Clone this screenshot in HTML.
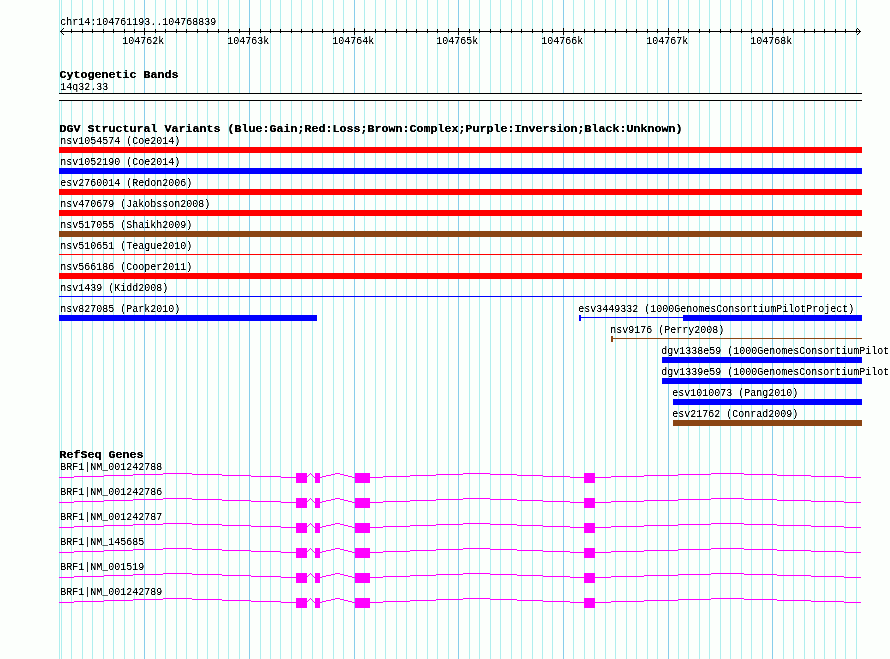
<!DOCTYPE html>
<html><head><meta charset="utf-8"><title>GBrowse track view</title>
<style>
html,body{margin:0;padding:0;background:#fcfffc;}
body{width:890px;height:659px;overflow:hidden;position:relative;}
svg{position:absolute;left:0;top:0;}
.s,.b{position:absolute;white-space:pre;font-family:"Liberation Mono",monospace;line-height:13px;height:13px;transform-origin:0 0;}
.s{-webkit-text-stroke:0.05px #000;font-size:11.5px;font-weight:400;color:#000;transform:translate(-0.7px,1px) scaleX(0.86942);}
.b{-webkit-text-stroke:0.2px #000;font-size:11.5px;font-weight:700;color:#000;transform:translate(-0.5px,1px) scaleX(1.01433);}
</style></head><body>
<svg width="890" height="659" viewBox="0 0 890 659" shape-rendering="crispEdges">
<rect x="59" y="0" width="1" height="659" fill="#afeeee"/>
<rect x="61" y="0" width="1" height="659" fill="#afeeee"/>
<rect x="71" y="0" width="1" height="659" fill="#afeeee"/>
<rect x="82" y="0" width="1" height="659" fill="#afeeee"/>
<rect x="92" y="0" width="1" height="659" fill="#afeeee"/>
<rect x="103" y="0" width="1" height="659" fill="#afeeee"/>
<rect x="113" y="0" width="1" height="659" fill="#afeeee"/>
<rect x="124" y="0" width="1" height="659" fill="#afeeee"/>
<rect x="134" y="0" width="1" height="659" fill="#afeeee"/>
<rect x="144" y="0" width="1" height="659" fill="#87ceeb"/>
<rect x="155" y="0" width="1" height="659" fill="#afeeee"/>
<rect x="165" y="0" width="1" height="659" fill="#afeeee"/>
<rect x="176" y="0" width="1" height="659" fill="#afeeee"/>
<rect x="186" y="0" width="1" height="659" fill="#afeeee"/>
<rect x="197" y="0" width="1" height="659" fill="#afeeee"/>
<rect x="207" y="0" width="1" height="659" fill="#afeeee"/>
<rect x="218" y="0" width="1" height="659" fill="#afeeee"/>
<rect x="228" y="0" width="1" height="659" fill="#afeeee"/>
<rect x="239" y="0" width="1" height="659" fill="#afeeee"/>
<rect x="249" y="0" width="1" height="659" fill="#87ceeb"/>
<rect x="260" y="0" width="1" height="659" fill="#afeeee"/>
<rect x="270" y="0" width="1" height="659" fill="#afeeee"/>
<rect x="280" y="0" width="1" height="659" fill="#afeeee"/>
<rect x="291" y="0" width="1" height="659" fill="#afeeee"/>
<rect x="301" y="0" width="1" height="659" fill="#afeeee"/>
<rect x="312" y="0" width="1" height="659" fill="#afeeee"/>
<rect x="322" y="0" width="1" height="659" fill="#afeeee"/>
<rect x="333" y="0" width="1" height="659" fill="#afeeee"/>
<rect x="343" y="0" width="1" height="659" fill="#afeeee"/>
<rect x="354" y="0" width="1" height="659" fill="#87ceeb"/>
<rect x="364" y="0" width="1" height="659" fill="#afeeee"/>
<rect x="375" y="0" width="1" height="659" fill="#afeeee"/>
<rect x="385" y="0" width="1" height="659" fill="#afeeee"/>
<rect x="396" y="0" width="1" height="659" fill="#afeeee"/>
<rect x="406" y="0" width="1" height="659" fill="#afeeee"/>
<rect x="416" y="0" width="1" height="659" fill="#afeeee"/>
<rect x="427" y="0" width="1" height="659" fill="#afeeee"/>
<rect x="437" y="0" width="1" height="659" fill="#afeeee"/>
<rect x="448" y="0" width="1" height="659" fill="#afeeee"/>
<rect x="458" y="0" width="1" height="659" fill="#87ceeb"/>
<rect x="469" y="0" width="1" height="659" fill="#afeeee"/>
<rect x="479" y="0" width="1" height="659" fill="#afeeee"/>
<rect x="490" y="0" width="1" height="659" fill="#afeeee"/>
<rect x="500" y="0" width="1" height="659" fill="#afeeee"/>
<rect x="511" y="0" width="1" height="659" fill="#afeeee"/>
<rect x="521" y="0" width="1" height="659" fill="#afeeee"/>
<rect x="532" y="0" width="1" height="659" fill="#afeeee"/>
<rect x="542" y="0" width="1" height="659" fill="#afeeee"/>
<rect x="552" y="0" width="1" height="659" fill="#afeeee"/>
<rect x="563" y="0" width="1" height="659" fill="#87ceeb"/>
<rect x="573" y="0" width="1" height="659" fill="#afeeee"/>
<rect x="584" y="0" width="1" height="659" fill="#afeeee"/>
<rect x="594" y="0" width="1" height="659" fill="#afeeee"/>
<rect x="605" y="0" width="1" height="659" fill="#afeeee"/>
<rect x="615" y="0" width="1" height="659" fill="#afeeee"/>
<rect x="626" y="0" width="1" height="659" fill="#afeeee"/>
<rect x="636" y="0" width="1" height="659" fill="#afeeee"/>
<rect x="647" y="0" width="1" height="659" fill="#afeeee"/>
<rect x="657" y="0" width="1" height="659" fill="#afeeee"/>
<rect x="668" y="0" width="1" height="659" fill="#87ceeb"/>
<rect x="678" y="0" width="1" height="659" fill="#afeeee"/>
<rect x="688" y="0" width="1" height="659" fill="#afeeee"/>
<rect x="699" y="0" width="1" height="659" fill="#afeeee"/>
<rect x="709" y="0" width="1" height="659" fill="#afeeee"/>
<rect x="720" y="0" width="1" height="659" fill="#afeeee"/>
<rect x="730" y="0" width="1" height="659" fill="#afeeee"/>
<rect x="741" y="0" width="1" height="659" fill="#afeeee"/>
<rect x="751" y="0" width="1" height="659" fill="#afeeee"/>
<rect x="762" y="0" width="1" height="659" fill="#afeeee"/>
<rect x="772" y="0" width="1" height="659" fill="#87ceeb"/>
<rect x="783" y="0" width="1" height="659" fill="#afeeee"/>
<rect x="793" y="0" width="1" height="659" fill="#afeeee"/>
<rect x="804" y="0" width="1" height="659" fill="#afeeee"/>
<rect x="814" y="0" width="1" height="659" fill="#afeeee"/>
<rect x="824" y="0" width="1" height="659" fill="#afeeee"/>
<rect x="835" y="0" width="1" height="659" fill="#afeeee"/>
<rect x="845" y="0" width="1" height="659" fill="#afeeee"/>
<rect x="856" y="0" width="1" height="659" fill="#afeeee"/>
<rect x="59" y="94" width="803" height="6" fill="#fcfffc"/>
<rect x="59" y="147" width="803" height="6" fill="#ff0000"/>
<rect x="59" y="168" width="803" height="6" fill="#0000ff"/>
<rect x="59" y="189" width="803" height="6" fill="#ff0000"/>
<rect x="59" y="210" width="803" height="6" fill="#ff0000"/>
<rect x="59" y="231" width="803" height="6" fill="#8b4513"/>
<rect x="59" y="273" width="803" height="6" fill="#ff0000"/>
<rect x="59" y="315" width="258" height="6" fill="#0000ff"/>
<rect x="579" y="315" width="2" height="6" fill="#0000ff"/>
<rect x="683" y="315" width="179" height="6" fill="#0000ff"/>
<rect x="611" y="336" width="2" height="6" fill="#8b4513"/>
<rect x="662" y="357" width="200" height="6" fill="#0000ff"/>
<rect x="662" y="378" width="200" height="6" fill="#0000ff"/>
<rect x="673" y="399" width="189" height="6" fill="#0000ff"/>
<rect x="673" y="420" width="189" height="6" fill="#8b4513"/>
<rect x="296" y="473" width="11" height="10" fill="#ff00ff"/>
<rect x="315" y="473" width="5" height="10" fill="#ff00ff"/>
<rect x="355" y="473" width="15" height="10" fill="#ff00ff"/>
<rect x="584" y="473" width="11" height="10" fill="#ff00ff"/>
<rect x="296" y="498" width="11" height="10" fill="#ff00ff"/>
<rect x="315" y="498" width="5" height="10" fill="#ff00ff"/>
<rect x="355" y="498" width="15" height="10" fill="#ff00ff"/>
<rect x="584" y="498" width="11" height="10" fill="#ff00ff"/>
<rect x="296" y="523" width="11" height="10" fill="#ff00ff"/>
<rect x="315" y="523" width="5" height="10" fill="#ff00ff"/>
<rect x="355" y="523" width="15" height="10" fill="#ff00ff"/>
<rect x="584" y="523" width="11" height="10" fill="#ff00ff"/>
<rect x="296" y="548" width="11" height="10" fill="#ff00ff"/>
<rect x="315" y="548" width="5" height="10" fill="#ff00ff"/>
<rect x="355" y="548" width="15" height="10" fill="#ff00ff"/>
<rect x="584" y="548" width="11" height="10" fill="#ff00ff"/>
<rect x="296" y="573" width="11" height="10" fill="#ff00ff"/>
<rect x="315" y="573" width="5" height="10" fill="#ff00ff"/>
<rect x="355" y="573" width="15" height="10" fill="#ff00ff"/>
<rect x="584" y="573" width="11" height="10" fill="#ff00ff"/>
<rect x="296" y="598" width="11" height="10" fill="#ff00ff"/>
<rect x="315" y="598" width="5" height="10" fill="#ff00ff"/>
<rect x="355" y="598" width="15" height="10" fill="#ff00ff"/>
<rect x="584" y="598" width="11" height="10" fill="#ff00ff"/>
<path fill="#000000" d="M60 31h801v1h-801zM60 31h1v1h-1zM61 30h1v1h-1zM62 29h1v1h-1zM63 28h1v1h-1zM60 31h1v1h-1zM61 32h1v1h-1zM62 33h1v1h-1zM63 34h1v1h-1zM860 31h1v1h-1zM859 30h1v1h-1zM858 29h1v1h-1zM857 28h1v1h-1zM860 31h1v1h-1zM859 32h1v1h-1zM858 33h1v1h-1zM857 34h1v1h-1zM71 29h1v1h-1zM71 30h1v1h-1zM71 31h1v1h-1zM71 32h1v1h-1zM82 29h1v1h-1zM82 30h1v1h-1zM82 31h1v1h-1zM82 32h1v1h-1zM92 29h1v1h-1zM92 30h1v1h-1zM92 31h1v1h-1zM92 32h1v1h-1zM103 29h1v1h-1zM103 30h1v1h-1zM103 31h1v1h-1zM103 32h1v1h-1zM113 29h1v1h-1zM113 30h1v1h-1zM113 31h1v1h-1zM113 32h1v1h-1zM124 29h1v1h-1zM124 30h1v1h-1zM124 31h1v1h-1zM124 32h1v1h-1zM134 29h1v1h-1zM134 30h1v1h-1zM134 31h1v1h-1zM134 32h1v1h-1zM144 28h1v1h-1zM144 29h1v1h-1zM144 30h1v1h-1zM144 31h1v1h-1zM144 32h1v1h-1zM144 33h1v1h-1zM144 34h1v1h-1zM155 29h1v1h-1zM155 30h1v1h-1zM155 31h1v1h-1zM155 32h1v1h-1zM165 29h1v1h-1zM165 30h1v1h-1zM165 31h1v1h-1zM165 32h1v1h-1zM176 29h1v1h-1zM176 30h1v1h-1zM176 31h1v1h-1zM176 32h1v1h-1zM186 29h1v1h-1zM186 30h1v1h-1zM186 31h1v1h-1zM186 32h1v1h-1zM197 29h1v1h-1zM197 30h1v1h-1zM197 31h1v1h-1zM197 32h1v1h-1zM207 29h1v1h-1zM207 30h1v1h-1zM207 31h1v1h-1zM207 32h1v1h-1zM218 29h1v1h-1zM218 30h1v1h-1zM218 31h1v1h-1zM218 32h1v1h-1zM228 29h1v1h-1zM228 30h1v1h-1zM228 31h1v1h-1zM228 32h1v1h-1zM239 29h1v1h-1zM239 30h1v1h-1zM239 31h1v1h-1zM239 32h1v1h-1zM249 28h1v1h-1zM249 29h1v1h-1zM249 30h1v1h-1zM249 31h1v1h-1zM249 32h1v1h-1zM249 33h1v1h-1zM249 34h1v1h-1zM260 29h1v1h-1zM260 30h1v1h-1zM260 31h1v1h-1zM260 32h1v1h-1zM270 29h1v1h-1zM270 30h1v1h-1zM270 31h1v1h-1zM270 32h1v1h-1zM280 29h1v1h-1zM280 30h1v1h-1zM280 31h1v1h-1zM280 32h1v1h-1zM291 29h1v1h-1zM291 30h1v1h-1zM291 31h1v1h-1zM291 32h1v1h-1zM301 29h1v1h-1zM301 30h1v1h-1zM301 31h1v1h-1zM301 32h1v1h-1zM312 29h1v1h-1zM312 30h1v1h-1zM312 31h1v1h-1zM312 32h1v1h-1zM322 29h1v1h-1zM322 30h1v1h-1zM322 31h1v1h-1zM322 32h1v1h-1zM333 29h1v1h-1zM333 30h1v1h-1zM333 31h1v1h-1zM333 32h1v1h-1zM343 29h1v1h-1zM343 30h1v1h-1zM343 31h1v1h-1zM343 32h1v1h-1zM354 28h1v1h-1zM354 29h1v1h-1zM354 30h1v1h-1zM354 31h1v1h-1zM354 32h1v1h-1zM354 33h1v1h-1zM354 34h1v1h-1zM364 29h1v1h-1zM364 30h1v1h-1zM364 31h1v1h-1zM364 32h1v1h-1zM375 29h1v1h-1zM375 30h1v1h-1zM375 31h1v1h-1zM375 32h1v1h-1zM385 29h1v1h-1zM385 30h1v1h-1zM385 31h1v1h-1zM385 32h1v1h-1zM396 29h1v1h-1zM396 30h1v1h-1zM396 31h1v1h-1zM396 32h1v1h-1zM406 29h1v1h-1zM406 30h1v1h-1zM406 31h1v1h-1zM406 32h1v1h-1zM416 29h1v1h-1zM416 30h1v1h-1zM416 31h1v1h-1zM416 32h1v1h-1zM427 29h1v1h-1zM427 30h1v1h-1zM427 31h1v1h-1zM427 32h1v1h-1zM437 29h1v1h-1zM437 30h1v1h-1zM437 31h1v1h-1zM437 32h1v1h-1zM448 29h1v1h-1zM448 30h1v1h-1zM448 31h1v1h-1zM448 32h1v1h-1zM458 28h1v1h-1zM458 29h1v1h-1zM458 30h1v1h-1zM458 31h1v1h-1zM458 32h1v1h-1zM458 33h1v1h-1zM458 34h1v1h-1zM469 29h1v1h-1zM469 30h1v1h-1zM469 31h1v1h-1zM469 32h1v1h-1zM479 29h1v1h-1zM479 30h1v1h-1zM479 31h1v1h-1zM479 32h1v1h-1zM490 29h1v1h-1zM490 30h1v1h-1zM490 31h1v1h-1zM490 32h1v1h-1zM500 29h1v1h-1zM500 30h1v1h-1zM500 31h1v1h-1zM500 32h1v1h-1zM511 29h1v1h-1zM511 30h1v1h-1zM511 31h1v1h-1zM511 32h1v1h-1zM521 29h1v1h-1zM521 30h1v1h-1zM521 31h1v1h-1zM521 32h1v1h-1zM532 29h1v1h-1zM532 30h1v1h-1zM532 31h1v1h-1zM532 32h1v1h-1zM542 29h1v1h-1zM542 30h1v1h-1zM542 31h1v1h-1zM542 32h1v1h-1zM552 29h1v1h-1zM552 30h1v1h-1zM552 31h1v1h-1zM552 32h1v1h-1zM563 28h1v1h-1zM563 29h1v1h-1zM563 30h1v1h-1zM563 31h1v1h-1zM563 32h1v1h-1zM563 33h1v1h-1zM563 34h1v1h-1zM573 29h1v1h-1zM573 30h1v1h-1zM573 31h1v1h-1zM573 32h1v1h-1zM584 29h1v1h-1zM584 30h1v1h-1zM584 31h1v1h-1zM584 32h1v1h-1zM594 29h1v1h-1zM594 30h1v1h-1zM594 31h1v1h-1zM594 32h1v1h-1zM605 29h1v1h-1zM605 30h1v1h-1zM605 31h1v1h-1zM605 32h1v1h-1zM615 29h1v1h-1zM615 30h1v1h-1zM615 31h1v1h-1zM615 32h1v1h-1zM626 29h1v1h-1zM626 30h1v1h-1zM626 31h1v1h-1zM626 32h1v1h-1zM636 29h1v1h-1zM636 30h1v1h-1zM636 31h1v1h-1zM636 32h1v1h-1zM647 29h1v1h-1zM647 30h1v1h-1zM647 31h1v1h-1zM647 32h1v1h-1zM657 29h1v1h-1zM657 30h1v1h-1zM657 31h1v1h-1zM657 32h1v1h-1zM668 28h1v1h-1zM668 29h1v1h-1zM668 30h1v1h-1zM668 31h1v1h-1zM668 32h1v1h-1zM668 33h1v1h-1zM668 34h1v1h-1zM678 29h1v1h-1zM678 30h1v1h-1zM678 31h1v1h-1zM678 32h1v1h-1zM688 29h1v1h-1zM688 30h1v1h-1zM688 31h1v1h-1zM688 32h1v1h-1zM699 29h1v1h-1zM699 30h1v1h-1zM699 31h1v1h-1zM699 32h1v1h-1zM709 29h1v1h-1zM709 30h1v1h-1zM709 31h1v1h-1zM709 32h1v1h-1zM720 29h1v1h-1zM720 30h1v1h-1zM720 31h1v1h-1zM720 32h1v1h-1zM730 29h1v1h-1zM730 30h1v1h-1zM730 31h1v1h-1zM730 32h1v1h-1zM741 29h1v1h-1zM741 30h1v1h-1zM741 31h1v1h-1zM741 32h1v1h-1zM751 29h1v1h-1zM751 30h1v1h-1zM751 31h1v1h-1zM751 32h1v1h-1zM762 29h1v1h-1zM762 30h1v1h-1zM762 31h1v1h-1zM762 32h1v1h-1zM772 28h1v1h-1zM772 29h1v1h-1zM772 30h1v1h-1zM772 31h1v1h-1zM772 32h1v1h-1zM772 33h1v1h-1zM772 34h1v1h-1zM783 29h1v1h-1zM783 30h1v1h-1zM783 31h1v1h-1zM783 32h1v1h-1zM793 29h1v1h-1zM793 30h1v1h-1zM793 31h1v1h-1zM793 32h1v1h-1zM804 29h1v1h-1zM804 30h1v1h-1zM804 31h1v1h-1zM804 32h1v1h-1zM814 29h1v1h-1zM814 30h1v1h-1zM814 31h1v1h-1zM814 32h1v1h-1zM824 29h1v1h-1zM824 30h1v1h-1zM824 31h1v1h-1zM824 32h1v1h-1zM835 29h1v1h-1zM835 30h1v1h-1zM835 31h1v1h-1zM835 32h1v1h-1zM845 29h1v1h-1zM845 30h1v1h-1zM845 31h1v1h-1zM845 32h1v1h-1zM856 29h1v1h-1zM856 30h1v1h-1zM856 31h1v1h-1zM856 32h1v1h-1zM59 93h803v1h-803zM59 100h803v1h-803z"/>
<path fill="#ff0000" d="M59 254h803v1h-803z"/>
<path fill="#0000ff" d="M59 296h803v1h-803zM579 317h283v1h-283z"/>
<path fill="#8b4513" d="M611 338h251v1h-251z"/>
<path fill="#ff00ff" d="M59 477h15v1h-15zM74 476h30v1h-30zM104 475h29v1h-29zM133 474h30v1h-30zM163 473h15v1h-15zM177 473h15v1h-15zM192 474h30v1h-30zM222 475h29v1h-29zM251 476h30v1h-30zM281 477h15v1h-15zM306 477h1v1h-1zM307 476h1v1h-1zM308 475h1v1h-1zM309 474h1v1h-1zM310 473h1v1h-1zM310 473h1v1h-1zM311 474h1v1h-1zM312 475h1v1h-1zM313 476h1v1h-1zM314 477h1v1h-1zM319 477h3v1h-3zM322 476h4v1h-4zM326 475h5v1h-5zM331 474h4v1h-4zM335 473h3v1h-3zM337 473h3v1h-3zM340 474h4v1h-4zM344 475h4v1h-4zM348 476h4v1h-4zM352 477h3v1h-3zM369 477h14v1h-14zM383 476h27v1h-27zM410 475h26v1h-26zM436 474h27v1h-27zM463 473h14v1h-14zM476 473h14v1h-14zM490 474h27v1h-27zM517 475h26v1h-26zM543 476h27v1h-27zM570 477h14v1h-14zM594 477h17v1h-17zM611 476h33v1h-33zM644 475h34v1h-34zM678 474h33v1h-33zM711 473h17v1h-17zM727 473h17v1h-17zM744 474h33v1h-33zM777 475h34v1h-34zM811 476h33v1h-33zM844 477h17v1h-17zM59 502h15v1h-15zM74 501h30v1h-30zM104 500h29v1h-29zM133 499h30v1h-30zM163 498h15v1h-15zM177 498h15v1h-15zM192 499h30v1h-30zM222 500h29v1h-29zM251 501h30v1h-30zM281 502h15v1h-15zM306 502h1v1h-1zM307 501h1v1h-1zM308 500h1v1h-1zM309 499h1v1h-1zM310 498h1v1h-1zM310 498h1v1h-1zM311 499h1v1h-1zM312 500h1v1h-1zM313 501h1v1h-1zM314 502h1v1h-1zM319 502h3v1h-3zM322 501h4v1h-4zM326 500h5v1h-5zM331 499h4v1h-4zM335 498h3v1h-3zM337 498h3v1h-3zM340 499h4v1h-4zM344 500h4v1h-4zM348 501h4v1h-4zM352 502h3v1h-3zM369 502h14v1h-14zM383 501h27v1h-27zM410 500h26v1h-26zM436 499h27v1h-27zM463 498h14v1h-14zM476 498h14v1h-14zM490 499h27v1h-27zM517 500h26v1h-26zM543 501h27v1h-27zM570 502h14v1h-14zM594 502h17v1h-17zM611 501h33v1h-33zM644 500h34v1h-34zM678 499h33v1h-33zM711 498h17v1h-17zM727 498h17v1h-17zM744 499h33v1h-33zM777 500h34v1h-34zM811 501h33v1h-33zM844 502h17v1h-17zM59 527h15v1h-15zM74 526h30v1h-30zM104 525h29v1h-29zM133 524h30v1h-30zM163 523h15v1h-15zM177 523h15v1h-15zM192 524h30v1h-30zM222 525h29v1h-29zM251 526h30v1h-30zM281 527h15v1h-15zM306 527h1v1h-1zM307 526h1v1h-1zM308 525h1v1h-1zM309 524h1v1h-1zM310 523h1v1h-1zM310 523h1v1h-1zM311 524h1v1h-1zM312 525h1v1h-1zM313 526h1v1h-1zM314 527h1v1h-1zM319 527h3v1h-3zM322 526h4v1h-4zM326 525h5v1h-5zM331 524h4v1h-4zM335 523h3v1h-3zM337 523h3v1h-3zM340 524h4v1h-4zM344 525h4v1h-4zM348 526h4v1h-4zM352 527h3v1h-3zM369 527h14v1h-14zM383 526h27v1h-27zM410 525h26v1h-26zM436 524h27v1h-27zM463 523h14v1h-14zM476 523h14v1h-14zM490 524h27v1h-27zM517 525h26v1h-26zM543 526h27v1h-27zM570 527h14v1h-14zM594 527h17v1h-17zM611 526h33v1h-33zM644 525h34v1h-34zM678 524h33v1h-33zM711 523h17v1h-17zM727 523h17v1h-17zM744 524h33v1h-33zM777 525h34v1h-34zM811 526h33v1h-33zM844 527h17v1h-17zM59 552h15v1h-15zM74 551h30v1h-30zM104 550h29v1h-29zM133 549h30v1h-30zM163 548h15v1h-15zM177 548h15v1h-15zM192 549h30v1h-30zM222 550h29v1h-29zM251 551h30v1h-30zM281 552h15v1h-15zM306 552h1v1h-1zM307 551h1v1h-1zM308 550h1v1h-1zM309 549h1v1h-1zM310 548h1v1h-1zM310 548h1v1h-1zM311 549h1v1h-1zM312 550h1v1h-1zM313 551h1v1h-1zM314 552h1v1h-1zM319 552h3v1h-3zM322 551h4v1h-4zM326 550h5v1h-5zM331 549h4v1h-4zM335 548h3v1h-3zM337 548h3v1h-3zM340 549h4v1h-4zM344 550h4v1h-4zM348 551h4v1h-4zM352 552h3v1h-3zM369 552h14v1h-14zM383 551h27v1h-27zM410 550h26v1h-26zM436 549h27v1h-27zM463 548h14v1h-14zM476 548h14v1h-14zM490 549h27v1h-27zM517 550h26v1h-26zM543 551h27v1h-27zM570 552h14v1h-14zM594 552h17v1h-17zM611 551h33v1h-33zM644 550h34v1h-34zM678 549h33v1h-33zM711 548h17v1h-17zM727 548h17v1h-17zM744 549h33v1h-33zM777 550h34v1h-34zM811 551h33v1h-33zM844 552h17v1h-17zM59 577h15v1h-15zM74 576h30v1h-30zM104 575h29v1h-29zM133 574h30v1h-30zM163 573h15v1h-15zM177 573h15v1h-15zM192 574h30v1h-30zM222 575h29v1h-29zM251 576h30v1h-30zM281 577h15v1h-15zM306 577h1v1h-1zM307 576h1v1h-1zM308 575h1v1h-1zM309 574h1v1h-1zM310 573h1v1h-1zM310 573h1v1h-1zM311 574h1v1h-1zM312 575h1v1h-1zM313 576h1v1h-1zM314 577h1v1h-1zM319 577h3v1h-3zM322 576h4v1h-4zM326 575h5v1h-5zM331 574h4v1h-4zM335 573h3v1h-3zM337 573h3v1h-3zM340 574h4v1h-4zM344 575h4v1h-4zM348 576h4v1h-4zM352 577h3v1h-3zM369 577h14v1h-14zM383 576h27v1h-27zM410 575h26v1h-26zM436 574h27v1h-27zM463 573h14v1h-14zM476 573h14v1h-14zM490 574h27v1h-27zM517 575h26v1h-26zM543 576h27v1h-27zM570 577h14v1h-14zM594 577h17v1h-17zM611 576h33v1h-33zM644 575h34v1h-34zM678 574h33v1h-33zM711 573h17v1h-17zM727 573h17v1h-17zM744 574h33v1h-33zM777 575h34v1h-34zM811 576h33v1h-33zM844 577h17v1h-17zM59 602h15v1h-15zM74 601h30v1h-30zM104 600h29v1h-29zM133 599h30v1h-30zM163 598h15v1h-15zM177 598h15v1h-15zM192 599h30v1h-30zM222 600h29v1h-29zM251 601h30v1h-30zM281 602h15v1h-15zM306 602h1v1h-1zM307 601h1v1h-1zM308 600h1v1h-1zM309 599h1v1h-1zM310 598h1v1h-1zM310 598h1v1h-1zM311 599h1v1h-1zM312 600h1v1h-1zM313 601h1v1h-1zM314 602h1v1h-1zM319 602h3v1h-3zM322 601h4v1h-4zM326 600h5v1h-5zM331 599h4v1h-4zM335 598h3v1h-3zM337 598h3v1h-3zM340 599h4v1h-4zM344 600h4v1h-4zM348 601h4v1h-4zM352 602h3v1h-3zM369 602h14v1h-14zM383 601h27v1h-27zM410 600h26v1h-26zM436 599h27v1h-27zM463 598h14v1h-14zM476 598h14v1h-14zM490 599h27v1h-27zM517 600h26v1h-26zM543 601h27v1h-27zM570 602h14v1h-14zM594 602h17v1h-17zM611 601h33v1h-33zM644 600h34v1h-34zM678 599h33v1h-33zM711 598h17v1h-17zM727 598h17v1h-17zM744 599h33v1h-33zM777 600h34v1h-34zM811 601h33v1h-33zM844 602h17v1h-17z"/>
</svg>
<svg width="0" height="0" style="position:absolute"><filter id="bin" x="0" y="0" width="100%" height="100%" color-interpolation-filters="sRGB"><feComponentTransfer><feFuncA type="table" tableValues="0 0 0.6 1 1"/></feComponentTransfer></filter></svg>
<div id="txt" style="position:absolute;left:0;top:0;width:890px;height:659px;filter:url(#bin);">
<div class="s" style="left:61px;top:14px">chr14:104761193..104768839</div>
<div class="s" style="left:123px;top:33px">104762k</div>
<div class="s" style="left:228px;top:33px">104763k</div>
<div class="s" style="left:333px;top:33px">104764k</div>
<div class="s" style="left:437px;top:33px">104765k</div>
<div class="s" style="left:542px;top:33px">104766k</div>
<div class="s" style="left:647px;top:33px">104767k</div>
<div class="s" style="left:751px;top:33px">104768k</div>
<div class="b" style="left:60px;top:67px">Cytogenetic Bands</div>
<div class="s" style="left:61px;top:79px">14q32.33</div>
<div class="b" style="left:60px;top:121px">DGV Structural Variants (Blue:Gain;Red:Loss;Brown:Complex;Purple:Inversion;Black:Unknown)</div>
<div class="s" style="left:61px;top:133px">nsv1054574 (Coe2014)</div>
<div class="s" style="left:61px;top:154px">nsv1052190 (Coe2014)</div>
<div class="s" style="left:61px;top:175px">esv2760014 (Redon2006)</div>
<div class="s" style="left:61px;top:196px">nsv470679 (Jakobsson2008)</div>
<div class="s" style="left:61px;top:217px">nsv517055 (Shaikh2009)</div>
<div class="s" style="left:61px;top:238px">nsv510651 (Teague2010)</div>
<div class="s" style="left:61px;top:259px">nsv566186 (Cooper2011)</div>
<div class="s" style="left:61px;top:280px">nsv1439 (Kidd2008)</div>
<div class="s" style="left:61px;top:301px">nsv827085 (Park2010)</div>
<div class="s" style="left:579px;top:301px">esv3449332 (1000GenomesConsortiumPilotProject)</div>
<div class="s" style="left:611px;top:322px">nsv9176 (Perry2008)</div>
<div class="s" style="left:662px;top:343px">dgv1338e59 (1000GenomesConsortiumPilotProject)</div>
<div class="s" style="left:662px;top:364px">dgv1339e59 (1000GenomesConsortiumPilotProject)</div>
<div class="s" style="left:673px;top:385px">esv1010073 (Pang2010)</div>
<div class="s" style="left:673px;top:406px">esv21762 (Conrad2009)</div>
<div class="b" style="left:60px;top:447px">RefSeq Genes</div>
<div class="s" style="left:61px;top:459px">BRF1|NM_001242788</div>
<div class="s" style="left:61px;top:484px">BRF1|NM_001242786</div>
<div class="s" style="left:61px;top:509px">BRF1|NM_001242787</div>
<div class="s" style="left:61px;top:534px">BRF1|NM_145685</div>
<div class="s" style="left:61px;top:559px">BRF1|NM_001519</div>
<div class="s" style="left:61px;top:584px">BRF1|NM_001242789</div>
</div>
</body></html>
